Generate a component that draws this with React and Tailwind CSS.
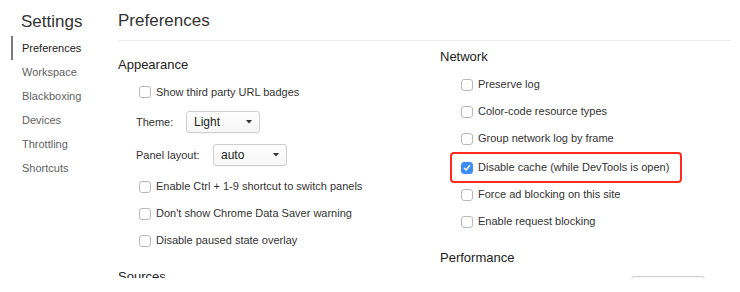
import React from "react";

const Check = ({ checked }) => (
  <span
    className={
      "flex items-center justify-center w-[12px] h-[12px] rounded-[3px] border shrink-0 " +
      (checked ? "bg-[#3b8ef7] border-[#3b8ef7]" : "bg-white border-[#b9b9b9]")
    }
  >
    {checked && (
      <svg width="8" height="8" viewBox="0 0 8 8" fill="none">
        <path d="M1.4 4.2 L3.2 6 L6.6 1.8" stroke="white" strokeWidth="1.4" strokeLinecap="round" strokeLinejoin="round" />
      </svg>
    )}
  </span>
);

const Row = ({ label, checked, className = "h-[27px]" }) => (
  <div className={"flex items-center shrink-0 gap-[5px] pl-[21px] " + className}>
    <Check checked={checked} />
    <span>{label}</span>
  </div>
);

const Select = ({ value, className = "" }) => (
  <div
    className={
      "flex items-center justify-between shrink-0 w-[74px] h-[22px] pl-[7px] pr-[7px] rounded-[3px] border border-[#cfcfcf] bg-gradient-to-b from-white to-[#f6f6f6] shadow-[0_1px_0_rgba(0,0,0,0.04)] " +
      className
    }
  >
    <span className="text-[12px] text-[#222]">{value}</span>
    <svg width="6" height="4" viewBox="0 0 6 4">
      <path d="M0 0 H6 L3 3.5 Z" fill="#333" />
    </svg>
  </div>
);

const Heading = ({ children, className = "" }) => (
  <div className={"h-[18px] shrink-0 leading-[18px] text-[13px] text-[#222] " + className}>{children}</div>
);

const items = ["Preferences", "Workspace", "Blackboxing", "Devices", "Throttling", "Shortcuts"];

export default function App() {
  return (
    <div
      className="w-[740px] h-[292px] bg-white overflow-hidden text-[11px] text-[#333]"
      style={{ fontFamily: '"Liberation Sans", Arial, sans-serif' }}
    >
      <div className="flex h-[278px] overflow-hidden">
        {/* sidebar */}
        <div className="w-[118px] shrink-0">
          <div className="pt-[12px] pl-[21px] h-[36px] text-[17px] leading-[20px] text-[#333]">Settings</div>
          {items.map((it, i) => (
            <div
              key={it}
              className={
                "ml-[11px] h-[24px] flex items-center border-l-2 pl-[9px] " +
                (i === 0 ? "border-[#7a7a7a] text-[#222]" : "border-transparent text-[#5f5f5f]")
              }
            >
              {it}
            </div>
          ))}
        </div>

        {/* main */}
        <div className="flex-1 flex flex-col">
          <div className="h-[41px] shrink-0 mr-[9px] border-b border-[#ebebeb] pt-[11px] text-[17px] leading-[20px] text-[#333]">
            Preferences
          </div>
          <div className="flex shrink-0">
            {/* left column */}
            <div className="w-[322px] flex flex-col">
              <Heading className="mt-[15px]">Appearance</Heading>
              <Row label="Show third party URL badges" className="h-[26px] mt-[5px]" />
              <div className="flex items-center shrink-0 h-[30px] mt-[2px] pl-[18px]">
                <span className="w-[50px]">Theme:</span>
                <Select value="Light" className="h-[21px] w-[73px]" />
              </div>
              <div className="flex items-center shrink-0 h-[30px] mt-[3px] pl-[18px]">
                <span className="w-[77px]">Panel layout:</span>
                <Select value="auto" />
              </div>
              <Row label="Enable Ctrl + 1-9 shortcut to switch panels" className="h-[27px] mt-[3px]" />
              <Row label="Don't show Chrome Data Saver warning" />
              <Row label="Disable paused state overlay" />
              <Heading className="mt-[14px]">Sources</Heading>
            </div>

            {/* right column */}
            <div className="flex-1 flex flex-col">
              <Heading className="mt-[7px]">Network</Heading>
              <Row label="Preserve log" className="h-[27px] mt-[5px]" />
              <Row label="Color-code resource types" />
              <Row label="Group network log by frame" />
              <div className="ml-[10px] w-[232px] h-[31px] shrink-0 flex items-center gap-[5px] pl-[9px] border-2 border-[#ff2b1c] rounded-[4px]">
                <Check checked />
                <span>Disable cache (while DevTools is open)</span>
              </div>
              <Row label="Force ad blocking on this site" className="h-[27px] -mt-[2px]" />
              <Row label="Enable request blocking" />
              <Heading className="mt-[14px]">Performance</Heading>
              <Select value="" className="mt-[9px] ml-[191px]" />
            </div>
          </div>
        </div>
      </div>
    </div>
  );
}
